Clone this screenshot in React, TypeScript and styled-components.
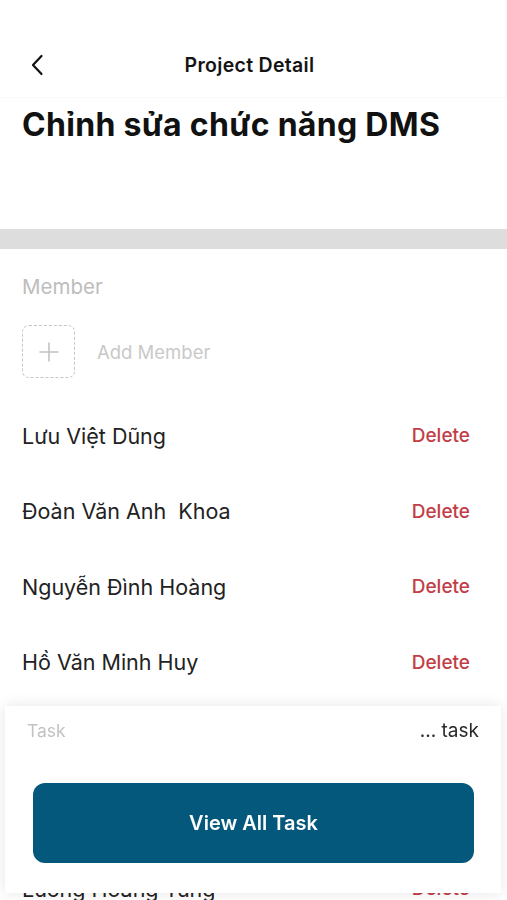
import React from 'react';
import styled, { createGlobalStyle } from 'styled-components';

const GlobalStyle = createGlobalStyle`
  html, body {
    margin: 0;
    padding: 0;
    background: #ffffff;
    font-family: 'Inter', 'Noto Sans', sans-serif;
    color: #1c1c1c;
  }
  * { box-sizing: border-box; }
`;

const Screen = styled.div`
  width: 100%;
  min-height: 100vh;
  background: #fff;
  padding-bottom: 40px;
`;

const NavBar = styled.header`
  height: 98px;
  padding: 32px 7px 0 0;
  display: grid;
  grid-template-columns: 60px 1fr 60px;
  align-items: center;
  border-right: 1px solid #f8f8f8;
  border-bottom: 1px solid #fafafa;
`;

const BackButton = styled.button`
  border: none;
  background: none;
  padding: 0 0 0 30px;
  height: 66px;
  display: flex;
  align-items: center;
  cursor: pointer;
`;

const NavTitle = styled.div`
  text-align: center;
  font-size: 19.5px;
  font-weight: 600;
  color: #141414;
  letter-spacing: 0.3px;
  height: 66px;
  line-height: 66px;
`;

const TitleBlock = styled.div`
  height: 131px;
  padding: 8px 22px 0;
`;

const ProjectTitle = styled.h1`
  margin: 0;
  font-size: 32px;
  line-height: 38px;
  font-weight: 700;
  color: #111;
  letter-spacing: 0.3px;
`;

const Band = styled.div`
  height: 20px;
  background: #dddddd;
`;

const Section = styled.section`
  padding: 26px 22px 0;
`;

const SectionLabel = styled.div`
  font-size: 20.5px;
  line-height: 24px;
  color: #bdbdbd;
`;

const AddRow = styled.div`
  margin-top: 26px;
  display: flex;
  align-items: center;
  gap: 22px;
`;

const DashedBox = styled.div`
  width: 53px;
  height: 53px;
  border: 1.5px dashed #c6c6c6;
  border-radius: 7px;
  display: flex;
  align-items: center;
  justify-content: center;
`;

const AddLabel = styled.span`
  font-size: 18.5px;
  color: #c9c9c9;
`;

const MemberList = styled.ul`
  list-style: none;
  margin: 20px 0 0;
  padding: 0;
`;

const MemberRow = styled.li`
  height: 75.5px;
  display: flex;
  align-items: center;
  justify-content: space-between;
  padding-right: 15px;
`;

const MemberName = styled.span`
  font-size: 21.5px;
  color: #222;
  white-space: pre;
`;

const DeleteLink = styled.button`
  border: none;
  background: none;
  padding: 0;
  font-family: inherit;
  font-size: 19px;
  font-weight: 500;
  color: #c23d45;
  cursor: pointer;
`;

const TaskSheet = styled.div`
  position: fixed;
  left: 5px;
  right: 6px;
  bottom: 7px;
  height: 187px;
  background: #fff;
  box-shadow: 0 0 14px rgba(0, 0, 0, 0.1);
  padding: 14px 22px 30px;
  display: flex;
  flex-direction: column;
  justify-content: space-between;
`;

const TaskHeader = styled.div`
  display: flex;
  justify-content: space-between;
  align-items: center;
  height: 20px;
`;

const TaskLabel = styled.span`
  font-size: 17.5px;
  color: #c2c2c2;
`;

const TaskCount = styled.span`
  font-size: 19px;
  color: #2a2a2a;
`;

const PrimaryButton = styled.button`
  margin: 0 5px 0 6px;
  height: 80px;
  border: none;
  border-radius: 12px;
  background: #03587b;
  color: #fff;
  font-family: inherit;
  font-size: 20px;
  font-weight: 600;
  cursor: pointer;
`;

const members = [
  'Lưu Việt Dũng',
  'Đoàn Văn Anh  Khoa',
  'Nguyễn Đình Hoàng',
  'Hồ Văn Minh Huy',
  'Trần Quốc Bảo',
  'Phạm Minh Tuấn',
  'Lương Hoàng Tùng',
];

export default function App() {
  return (
    <Screen>
      <GlobalStyle />
      <NavBar>
        <BackButton aria-label="Back">
          <svg width="14" height="22" viewBox="0 0 14 22" fill="none">
            <path d="M11.5 2 L3 11 L11.5 20" stroke="#111" strokeWidth="2.2" strokeLinecap="round" strokeLinejoin="round" />
          </svg>
        </BackButton>
        <NavTitle>Project Detail</NavTitle>
        <div />
      </NavBar>

      <TitleBlock>
        <ProjectTitle>Chỉnh sửa chức năng DMS</ProjectTitle>
      </TitleBlock>

      <Band />

      <Section>
        <SectionLabel>Member</SectionLabel>
        <AddRow>
          <DashedBox>
            <svg width="22" height="22" viewBox="0 0 22 22">
              <path d="M11 2 V20 M2 11 H20" stroke="#c2c2c2" strokeWidth="1.6" strokeLinecap="round" />
            </svg>
          </DashedBox>
          <AddLabel>Add Member</AddLabel>
        </AddRow>

        <MemberList>
          {members.map((name) => (
            <MemberRow key={name}>
              <MemberName>{name}</MemberName>
              <DeleteLink>Delete</DeleteLink>
            </MemberRow>
          ))}
        </MemberList>
      </Section>

      <TaskSheet>
        <TaskHeader>
          <TaskLabel>Task</TaskLabel>
          <TaskCount>... task</TaskCount>
        </TaskHeader>
        <PrimaryButton>View All Task</PrimaryButton>
      </TaskSheet>
    </Screen>
  );
}
